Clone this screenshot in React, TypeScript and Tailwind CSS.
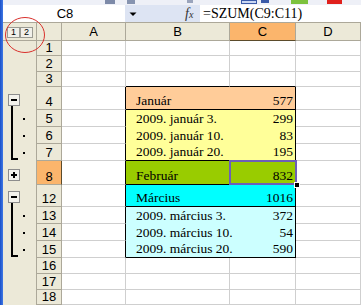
import React from "react";

type Row = {
    n: string;
    h: number;
    bg?: string;
    label?: string;
    val?: string;
    outline?: "minus" | "plus" | "dot" | "dotEnd" | "line";
    bottom?: boolean;
    selected?: boolean;
    tableTop?: boolean;
};

const rows: Row[] = [
    {n: "1", h: 17},
    {n: "2", h: 17},
    {n: "3", h: 17, tableTop: true},
    {n: "4", h: 23, bg: "bg-[#ffcc99]", label: "Január", val: "577", outline: "minus", bottom: true},
    {n: "5", h: 17, bg: "bg-[#ffff99]", label: "2009. január 3.", val: "299", outline: "dot"},
    {n: "6", h: 17, bg: "bg-[#ffff99]", label: "2009. január 10.", val: "83", outline: "dot"},
    {n: "7", h: 17, bg: "bg-[#ffff99]", label: "2009. január 20.", val: "195", outline: "dotEnd", bottom: true},
    {n: "8", h: 24, bg: "bg-[#99cc00]", label: "Február", val: "832", outline: "plus", bottom: true, selected: true},
    {n: "12", h: 22, bg: "bg-[#00ffff]", label: "Március", val: "1016", outline: "minus", bottom: true},
    {n: "13", h: 17, bg: "bg-[#ccffff]", label: "2009. március 3.", val: "372", outline: "dot"},
    {n: "14", h: 17, bg: "bg-[#ccffff]", label: "2009. március 10.", val: "54", outline: "dot"},
    {n: "15", h: 17, bg: "bg-[#ccffff]", label: "2009. március 20.", val: "590", outline: "dotEnd", bottom: true},
    {n: "16", h: 18},
    {n: "17", h: 17},
    {n: "18", h: 17},
];

function OutlineMark({kind, h}: { kind?: Row["outline"]; h: number }) {
    if (!kind) return null;
    const btnY = kind === "plus" ? 8 : h > 22 ? 7 : 6;
    return (
        <svg width={33} height={h} className="block">
            {(kind === "minus" || kind === "plus") && (
                <g>
                    <rect x={5.5} y={btnY + 0.5} width={11} height={11} fill="#f3f2ec" stroke="#8d8d8d"/>
                    <rect x={8} y={btnY + 5} width={6} height={2} fill="#000"/>
                    {kind === "plus" && <rect x={10} y={btnY + 3} width={2} height={6} fill="#000"/>}
                    {kind === "minus" && <rect x={8} y={btnY + 12} width={2} height={h - btnY - 12} fill="#000"/>}
                </g>
            )}
            {kind === "dot" && (
                <g>
                    <rect x={8} y={0} width={2} height={h} fill="#000"/>
                    <rect x={20} y={8} width={2} height={2} fill="#000"/>
                </g>
            )}
            {kind === "dotEnd" && (
                <g>
                    <rect x={8} y={0} width={2} height={16} fill="#000"/>
                    <rect x={8} y={14} width={7} height={2} fill="#000"/>
                    <rect x={20} y={8} width={2} height={2} fill="#000"/>
                </g>
            )}
        </svg>
    );
}

function SheetRow({row}: { row: Row }) {
    const inTable = !!row.bg;
    const cellText = "font-['Liberation_Serif',serif] text-[13.5px] leading-none text-black whitespace-nowrap";
    return (
        <div className="flex" style={{height: row.h}}>
            <div className="w-[33px] shrink-0 bg-[#ece9d8]">
                <OutlineMark kind={row.outline} h={row.h}/>
            </div>
            <div
                className={`w-[26px] shrink-0 flex items-end justify-center pb-[1px] border-l border-b border-r border-[#aca899] font-['Liberation_Sans',sans-serif] text-[13px] leading-none ${row.selected ? "bg-[#fbb56c] border-r-[#5b4b2b]" : "bg-[#ece9d8]"}`}>
                {row.n}
            </div>
            <div
                className={`w-[64px] shrink-0 border-b border-[#cfcfcf] border-r ${inTable ? "border-r-black" : ""}`}/>
            {inTable ? (
                <div className={`w-[170px] shrink-0 flex border-r border-black ${row.bg} ${row.bottom ? "border-b" : ""}`}>
                    <div className={`w-[104px] shrink-0 flex items-end pl-[10px] pb-[2px] ${cellText}`}>{row.label}</div>
                    <div className={`relative w-[65px] shrink-0 flex items-end justify-end pr-[2px] pb-[2px] ${cellText}`}>
                        {row.val}
                        {row.selected && (
                            <>
                                <div className="absolute -left-[1px] -top-[1px] -right-[2px] -bottom-[1px] border-2 border-[#6d5fb8]"/>
                                <div className="absolute -right-[5px] -bottom-[4px] w-[6px] h-[6px] bg-black border border-white"/>
                            </>
                        )}
                    </div>
                </div>
            ) : (
                <>
                    <div className={`w-[104px] shrink-0 border-r border-b border-[#cfcfcf] ${row.tableTop ? "border-b-black" : ""}`}/>
                    <div className={`w-[66px] shrink-0 border-r border-b border-[#cfcfcf] ${row.tableTop ? "border-b-black" : ""}`}/>
                </>
            )}
            <div className="w-[65px] shrink-0 border-r border-b border-[#cfcfcf]"/>
        </div>
    );
}

export default function App() {
    const hdr = "flex items-center justify-center border-r border-b border-[#aca899] font-['Liberation_Sans',sans-serif] text-[13px] leading-none";
    return (
        <div className="relative w-[361px] h-[305px] overflow-hidden bg-white flex">
            <div className="w-[3px] shrink-0 bg-gradient-to-r from-[#1b4fc7] to-[#3f78e6]"/>
            <div className="flex-1 flex flex-col">
                {/* toolbar remnants */}
                <div className="h-[5px] shrink-0 bg-[#eef0f7] flex items-start">
                    <div className="ml-[102px] w-[10px] h-[4px] bg-[#7d8aa8]"/>
                    <div className="ml-[12px] w-[8px] h-[4px] bg-[#8794b0]"/>
                    <div className="ml-[52px] w-[6px] h-[3px] bg-[#9aa4bc]"/>
                    <div className="ml-[48px] w-[16px] h-[4px] border border-[#3a5aa8] bg-[#c9d6f2]"/>
                    <div className="ml-[4px] w-[8px] h-[3px] bg-[#3a5aa8]"/>
                    <div className="ml-[22px] w-[17px] h-[4px] bg-[#7cc23d]"/>
                    <div className="ml-[19px] w-[15px] h-[4px] bg-[#e0201c]"/>
                </div>
                {/* formula bar */}
                <div className="h-[18px] shrink-0 flex border-b border-[#aca899]">
                    <div className="w-[122px] bg-white flex items-center justify-center pl-[2px] font-['Liberation_Sans',sans-serif] text-[13px] leading-none">
                        C8
                    </div>
                    <div className="w-[75px] bg-[#dde4f3] flex items-center">
                        <svg width={18} height={17} className="block">
                            <path d="M4.5 7.5 L11.5 7.5 L8 11 Z" fill="#000"/>
                        </svg>
                        <span className="ml-[42px] font-['Liberation_Serif',serif] italic text-[14px] leading-none text-[#333]">
                            f<span className="text-[10px]">x</span>
                        </span>
                    </div>
                    <div className="flex-1 bg-white flex items-center pl-[3px] font-['Liberation_Serif',serif] text-[14px] leading-none">
                        =SZUM(C9:C11)
                    </div>
                </div>
                {/* column headers */}
                <div className="h-[18px] shrink-0 flex">
                    <div className="w-[33px] shrink-0 bg-[#ece9d8] flex items-center pl-[4px] pt-[1px] border-b border-[#aca899]">
                        {["1", "2"].map(l => (
                            <div key={l}
                                 className="w-[13px] h-[11px] border border-[#9b9b93] bg-[#f1f0ea] flex items-center justify-center font-['Liberation_Sans',sans-serif] text-[9px] leading-none">
                                {l}
                            </div>
                        ))}
                    </div>
                    <div className={`w-[26px] shrink-0 bg-[#ece9d8] border-l ${hdr}`}/>
                    <div className={`w-[64px] shrink-0 bg-[#ece9d8] ${hdr}`}>A</div>
                    <div className={`w-[104px] shrink-0 bg-[#ece9d8] ${hdr}`}>B</div>
                    <div className={`w-[66px] shrink-0 bg-[#fbb56c] ${hdr} border-b-[#5b4b2b]`}>C</div>
                    <div className={`w-[65px] shrink-0 bg-[#ece9d8] ${hdr}`}>D</div>
                </div>
                {rows.map(r => <SheetRow key={r.n} row={r}/>)}
            </div>
            {/* red annotation circle around outline level buttons */}
            <svg className="absolute left-0 top-0 pointer-events-none" width={60} height={60}>
                <ellipse cx={25} cy={35} rx={19.5} ry={17.5} fill="none" stroke="#d9302c" strokeWidth={1}/>
            </svg>
        </div>
    );
}
